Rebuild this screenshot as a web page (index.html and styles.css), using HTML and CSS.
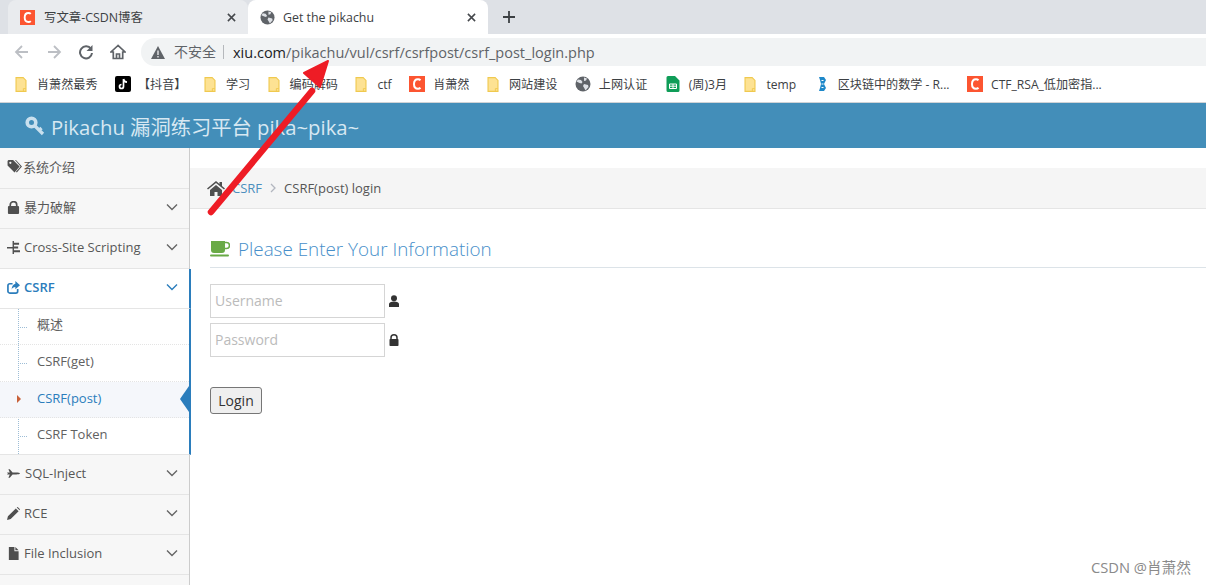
FILE: index.html
```html
<!DOCTYPE html>
<html lang="zh">
<head>
    <meta charset="UTF-8">
    <title>Get the pikachu</title>
    <link rel="stylesheet" href="styles.css">
</head>
<body>
    <svg class="defs" width="0" height="0">
        <defs>
            <symbol id="folder" viewBox="0 0 12 16">
                <path d="M.7.7h7.6l3 3v11.6H.7z" fill="#fdE293" stroke="#f0c94f" stroke-width="1.2"/>
                <path d="M8.5 15v-2.6h2.6" fill="none" stroke="#f0c94f" stroke-width="1"/>
            </symbol>
            <symbol id="csdn" viewBox="0 0 16 16">
                <rect width="16" height="16" fill="#fc5531"/>
                <path d="M11.5 4.2C10.8 3.5 9.9 3.2 9 3.2c-2.4 0-4 2-4 4.8s1.600 4.800 4 4.800c.9 0 1.800-.3 2.500-1" fill="none" stroke="#fff" stroke-width="2"/>
            </symbol>
            <symbol id="globe" viewBox="0 0 16 16">
                <circle cx="8" cy="8" r="7.500" fill="#5f6368"/>
                <path d="M3 3.500l3 .5 1.500 2-1 1.500-2-.5-3-1.500zM9 1.500l3 1-1 2-2 .5zM9 8l4 1 .5 2-3 3.500-1-2-1.500-2.500z" fill="#dee1e6"/>
            </symbol>
            <symbol id="chevron" viewBox="0 0 12 8">
                <path d="M1 1.500l5 5 5-5" fill="none" stroke="currentColor" stroke-width="1.400"/>
            </symbol>
        </defs>
    </svg>

    <div class="tabstrip">
        <div class="tab">
            <svg class="favicon"><use href="#csdn"/></svg>
            <span class="tab-title">写文章-CSDN博客</span>
            <svg class="tab-close" viewBox="0 0 10 10"><path d="M1 1l8 8M9 1l-8 8" stroke="#45484c" stroke-width="1.700"/></svg>
        </div>
        <div class="tab tab-active">
            <svg class="favicon"><use href="#globe"/></svg>
            <span class="tab-title">Get the pikachu</span>
            <svg class="tab-close" viewBox="0 0 10 10"><path d="M1 1l8 8M9 1l-8 8" stroke="#45484c" stroke-width="1.700"/></svg>
        </div>
        <svg class="newtab" viewBox="0 0 12 12"><path d="M6 0v12M0 6h12" stroke="#3c4043" stroke-width="1.800"/></svg>
    </div>

    <div class="toolbar">
        <svg class="nav-icon" viewBox="0 0 16 16"><path d="M14 8H2.500M8 2L2 8l6 6" fill="none" stroke="#bcbfc4" stroke-width="1.800"/></svg>
        <svg class="nav-icon" viewBox="0 0 16 16"><path d="M2 8h11.500M8 2l6 6-6 6" fill="none" stroke="#bcbfc4" stroke-width="1.800"/></svg>
        <svg class="nav-icon" viewBox="0 0 16 16"><path d="M13 5A6 6 0 1 0 14 9" fill="none" stroke="#5f6368" stroke-width="2"/><path d="M14.500 1v6h-6z" fill="#5f6368"/></svg>
        <svg class="nav-icon" viewBox="0 0 16 16"><path d="M8 1.500L1 8h2.300v6.500h9.400V8H15z M6.500 14.500V10h3v4.500" fill="none" stroke="#5f6368" stroke-width="1.700"/></svg>
        <div class="omnibox">
            <svg class="warn" viewBox="0 0 14 13"><path d="M7 0l7 13H0z" fill="#5f6368"/><path d="M7 4.500v4.500M7 10v1.500" stroke="#f1f3f4" stroke-width="1.300"/></svg>
            <span class="insecure">不安全</span>
            <span class="url"><b>xiu.com</b>/pikachu/vul/csrf/csrfpost/csrf_post_login.php</span>
        </div>
    </div>

    <div class="bookmarks">
        <div class="bm"><svg class="bm-icon"><use href="#folder"/></svg>肖萧然最秀</div>
        <div class="bm bm-tt">
            <svg class="bm-icon-full" viewBox="0 0 16 16"><rect width="16" height="16" rx="2" fill="#000"/><path d="M8.500 3v7.500a2 2 0 1 1-2-2M8.500 3c.3 2 1.500 3 3.500 3.200" fill="none" stroke="#fff" stroke-width="1.700"/></svg>【抖音】
        </div>
        <div class="bm"><svg class="bm-icon"><use href="#folder"/></svg>学习</div>
        <div class="bm"><svg class="bm-icon"><use href="#folder"/></svg>编码解码</div>
        <div class="bm"><svg class="bm-icon"><use href="#folder"/></svg>ctf</div>
        <div class="bm"><svg class="bm-icon-full"><use href="#csdn"/></svg>肖萧然</div>
        <div class="bm"><svg class="bm-icon"><use href="#folder"/></svg>网站建设</div>
        <div class="bm"><svg class="bm-icon-full"><use href="#globe"/></svg>上网认证</div>
        <div class="bm">
            <svg class="bm-icon-full" viewBox="0 0 16 16"><path d="M1.500 1.500a1.500 1.500 0 0 1 1.500-1.500h7l4.500 4.500v10a1.500 1.500 0 0 1-1.500 1.500H3a1.500 1.500 0 0 1-1.500-1.500z" fill="#0f9d58"/><path d="M4.500 8h7v4.500h-7zM8 8v4.500M4.500 10.200h7" fill="none" stroke="#fff" stroke-width="1"/></svg>(周)3月
        </div>
        <div class="bm"><svg class="bm-icon"><use href="#folder"/></svg>temp</div>
        <div class="bm">
            <svg class="bm-icon-full" viewBox="0 0 16 16"><path d="M5 1l5 0 2 3-2 4 2 4-2 3H5l1-3 1-4-1-4z" fill="#1e88c9"/><path d="M7.500 4.500h2M7.500 8h2M7.500 11.500h2" stroke="#fff" stroke-width="1"/></svg>区块链中的数学 - R...
        </div>
        <div class="bm"><svg class="bm-icon-full"><use href="#csdn"/></svg>CTF_RSA_低加密指...</div>
    </div>

    <header class="app-header">
        <svg class="key-icon" viewBox="0 0 20 20"><circle cx="6.500" cy="6.500" r="4.300" fill="none" stroke="#c9e0ee" stroke-width="3.600"/><path d="M9.500 9.500l8.500 8.500M14 14.500l2.500-2.500" fill="none" stroke="#c9e0ee" stroke-width="3.200"/></svg>
        <span>Pikachu 漏洞练习平台 pika~pika~</span>
    </header>

    <div class="page">
        <nav class="sidebar">
            <div class="nav-item nav-first">
                <svg class="nav-glyph" viewBox="0 0 16 14"><path d="M0 1.500C0 .7.700 0 1.500 0H6l7 7-5.500 6.500L0 6z" fill="#4f4f4f"/><path d="M8 0h1l6.500 7L10 13.500l-1-.8L14 7z" fill="#4f4f4f"/><circle cx="3" cy="3" r="1.200" fill="#f7f7f7"/></svg>
                <span>系统介绍</span>
            </div>
            <div class="nav-item">
                <svg class="nav-glyph" viewBox="0 0 14 14"><path d="M3.500 6V4.200a3.500 3.500 0 0 1 7 0V6" fill="none" stroke="#4f4f4f" stroke-width="1.800"/><rect x="1" y="5.500" width="12" height="8.500" rx="1" fill="#4f4f4f"/></svg>
                <span class="cjk-up">暴力破解</span>
                <svg class="chevron"><use href="#chevron"/></svg>
            </div>
            <div class="nav-item">
                <svg class="nav-glyph" viewBox="0 0 14 14"><path d="M6 0h1.500v14H6zM0 6.500h6v1.500H0zM7.500 2H13v2H7.500zM7.500 6H12v2H7.500zM7.500 10H14v2H7.500z" fill="#4f4f4f"/></svg>
                <span>Cross-Site Scripting</span>
                <svg class="chevron"><use href="#chevron"/></svg>
            </div>
            <div class="nav-item nav-open">
                <svg class="nav-glyph" viewBox="0 0 14 14"><path d="M11.500 8.500V11a2 2 0 0 1-2 2H3a2 2 0 0 1-2-2V5a2 2 0 0 1 2-2h3" fill="none" stroke="#2b7dbc" stroke-width="1.800"/><path d="M9 0l5 4.500L9 9V6.500C7 6.500 5.500 7.500 5 9.500 5 6 6.500 3.500 9 3z" fill="#2b7dbc"/></svg>
                <span>CSRF</span>
                <svg class="chevron"><use href="#chevron"/></svg>
            </div>
            <ul class="submenu">
                <li class="sub-item"><span class="cjk-up-more">概述</span></li>
                <li class="sub-item">CSRF(get)</li>
                <li class="sub-item sub-active">CSRF(post)</li>
                <li class="sub-item">CSRF Token</li>
            </ul>
            <div class="nav-item">
                <svg class="nav-glyph" viewBox="0 0 14 12"><path d="M0 5l3 0L1.500 1.500h1.500L6 5h4c2 0 4 .5 4 1s-2 1-4 1H6L3 10.500H1.500L3 7H0l1-1z" fill="#4f4f4f"/></svg>
                <span class="nav-label-loose">SQL-Inject</span>
                <svg class="chevron"><use href="#chevron"/></svg>
            </div>
            <div class="nav-item">
                <svg class="nav-glyph" viewBox="0 0 14 14"><path d="M0 14l1-4L9.500 1.500l3 3L4 13zM10.500.500l1-.5 2.500 2.500-.5 1z" fill="#4f4f4f"/></svg>
                <span>RCE</span>
                <svg class="chevron"><use href="#chevron"/></svg>
            </div>
            <div class="nav-item">
                <svg class="nav-glyph" viewBox="0 0 14 14"><path d="M2 0h6v4.500h4.500V14H2zM9 0l3.500 3.500H9z" fill="#4f4f4f"/></svg>
                <span>File Inclusion</span>
                <svg class="chevron"><use href="#chevron"/></svg>
            </div>
        </nav>

        <main class="content">
            <div class="breadcrumbs">
                <svg class="home-icon" viewBox="0 0 18 15"><path d="M9 0L0 7.500l1 1L9 2l8 6.500 1-1-3-2.500V1h-2.500v2z" fill="#4f4f4f"/><path d="M3 9l6-5 6 5v6h-4.500v-4h-3v4H3z" fill="#4f4f4f"/></svg>
                <a class="crumb-link">CSRF</a>
                <svg class="crumb-sep" viewBox="0 0 6 10"><path d="M1 1l4 4-4 4" fill="none" stroke="#b2b6bf" stroke-width="1.300"/></svg>
                <span>CSRF(post) login</span>
            </div>
            <div class="panel">
                <h3 class="panel-title">
                    <svg class="cup-icon" viewBox="0 0 20 16"><path d="M1 0h14v9a3 3 0 0 1-3 3H4a3 3 0 0 1-3-3z" fill="#69aa46"/><path d="M15 1.500h1.500a2.500 2.500 0 0 1 0 6H15" fill="none" stroke="#69aa46" stroke-width="1.600"/><rect y="13.500" width="19" height="2" rx="1" fill="#69aa46"/></svg>
                    Please Enter Your Information
                </h3>
                <form class="login">
                    <div class="field">
                        <input class="input" type="text" placeholder="Username">
                        <svg class="field-icon" viewBox="0 0 12 12"><circle cx="6" cy="3.200" r="3" fill="#333"/><path d="M1 12V9c0-1.500 2-2.500 5-2.500s5 1 5 2.500v3z" fill="#333"/></svg>
                    </div>
                    <div class="field">
                        <input class="input" type="text" placeholder="Password">
                        <svg class="field-icon" viewBox="0 0 12 12"><path d="M3 5.500V3.800a3 3 0 0 1 6 0v1.700" fill="none" stroke="#333" stroke-width="1.500"/><rect x="1.500" y="5" width="9" height="7" rx=".8" fill="#333"/></svg>
                    </div>
                    <button class="submit" type="button">Login</button>
                </form>
            </div>
        </main>
    </div>

    <!-- annotation drawn over the screenshot -->
    <svg class="arrow" viewBox="0 0 1206 585" width="1206" height="585">
        <path d="M211 212L312 91" stroke="#ee1c25" stroke-width="6.500" stroke-linecap="round"/>
        <path d="M328 61L304 73 320 87 328 61z" fill="#ee1c25" stroke="#ee1c25" stroke-width="2" stroke-linejoin="round"/>
    </svg>

    <div class="watermark">CSDN @肖萧然</div>
</body>
</html>
```

FILE: styles.css
```css
* {
    box-sizing: border-box;
}
html, body {
    height: 100%;
}
body {
    margin: 0;
    width: 1206px;
    height: 585px;
    overflow: hidden;
    position: relative;
    background: #fff;
    color: #3c4043;
    font-family: "Open Sans", "Noto Sans CJK SC", sans-serif;
    font-size: 13px;
}
.defs {
    display: block;
    height: 0;
}

/* browser chrome */
.tabstrip {
    height: 34px;
    display: flex;
    align-items: flex-end;
    padding-left: 8px;
    background: #dee1e6;
}
.tab {
    width: 240px;
    height: 34px;
    display: flex;
    align-items: center;
    padding: 0 12px;
    background: #e9ebee;
    border-radius: 8px 8px 0 0;
    font-size: 12.400px;
}
.tab-active {
    background: #fff;
}
.favicon {
    width: 15px;
    height: 15px;
    flex: none;
    margin-right: 9px;
}
.tab-active .favicon {
    margin-right: 8px;
}
.tab-title {
    flex: 1;
    white-space: nowrap;
}
.tab-close {
    width: 9px;
    height: 9px;
    flex: none;
}
.newtab {
    width: 12px;
    height: 12px;
    margin: 0 0 11px 15px;
}
.toolbar {
    height: 32px;
    display: flex;
    align-items: flex-end;
    padding-left: 14px;
    background: #fff;
}
.nav-icon {
    width: 16px;
    height: 16px;
    margin: 0 16px 6px 0;
    flex: none;
}
.omnibox {
    flex: 1;
    height: 28px;
    margin-left: -1px;
    display: flex;
    align-items: center;
    padding-left: 10px;
    background: #f1f3f4;
    border-radius: 14px 0 0 14px;
}
.warn {
    width: 14px;
    height: 13px;
    margin-right: 9px;
}
.insecure {
    padding-right: 7px;
    border-right: 1px solid #b5b8bc;
    line-height: 14px;
    font-size: 14px;
    color: #5f6368;
}
.url {
    margin-left: 9px;
    font-size: 14.500px;
    color: #5f6368;
    white-space: nowrap;
}
.url b {
    font-weight: 400;
    color: #202124;
}
.bookmarks {
    height: 37px;
    display: flex;
    align-items: center;
    gap: 17.500px;
    padding-left: 15px;
    background: #fff;
    border-bottom: 1px solid #d0d3d6;
    font-size: 12.100px;
    color: #3c4043;
    white-space: nowrap;
}
.bm {
    display: flex;
    align-items: center;
}
.bm-icon {
    width: 12px;
    height: 15px;
    margin-right: 10px;
    flex: none;
}
.bm-icon-full {
    width: 16px;
    height: 16px;
    margin-right: 8px;
    flex: none;
}
.bm-tt .bm-icon-full {
    margin-right: 7px;
}

/* pikachu page */
.app-header {
    height: 45px;
    display: flex;
    align-items: center;
    padding-left: 25px;
    background: #438eb9;
    color: #d7e8f2;
    font-size: 20.300px;
    white-space: nowrap;
}
.key-icon {
    width: 20px;
    height: 20px;
    margin-right: 6px;
}
.page {
    display: flex;
    height: 437px;
    overflow: hidden;
}
.sidebar {
    width: 190px;
    flex: none;
    background: #f7f7f7;
    border-right: 1px solid #ccc;
}
.nav-item {
    height: 40px;
    display: flex;
    align-items: center;
    padding: 0 11px 3px 7px;
    background: #f7f7f7;
    border-bottom: 1px solid #e5e5e5;
    color: #585858;
    white-space: nowrap;
}
.nav-first {
    height: 41px;
}
.nav-glyph {
    width: 13px;
    height: 13px;
    margin-right: 4px;
    flex: none;
}
.nav-first .nav-glyph {
    width: 16px;
    margin-right: 0;
}
.nav-label-loose {
    margin-left: 1px;
}
.cjk-up {
    margin-bottom: 2px;
}
.cjk-up-more {
    margin-bottom: 4px;
}
.chevron {
    width: 12px;
    height: 8px;
    margin-left: auto;
    color: #666;
}
.nav-open {
    background: #fff;
    color: #2b7dbc;
    font-weight: 600;
    width: 191px;
    border-right: 2px solid #2b7dbc;
}
.nav-open .chevron {
    color: #2b7dbc;
}
.submenu {
    list-style: none;
    margin: 0;
    padding: 0;
    width: 191px;
    background: #fff;
    border-right: 2px solid #2b7dbc;
    border-bottom: 1px solid #e5e5e5;
    position: relative;
}
.submenu::before {
    content: "";
    position: absolute;
    left: 18px;
    top: 0;
    bottom: 0;
    border-left: 1px dotted #9dbdd6;
}
.sub-item {
    height: 36.250px;
    display: flex;
    align-items: center;
    padding: 0 0 3px 37px;
    border-bottom: 1px dotted #e4e4e4;
    color: #616161;
    position: relative;
}
.sub-item:last-child {
    border-bottom: none;
}
.sub-item::before {
    content: "";
    position: absolute;
    left: 20px;
    top: 50%;
    width: 7px;
    border-top: 1px dotted #9dbdd6;
}
.sub-active {
    background: #f5f7fb;
    color: #2b7dbc;
}
.sub-active::before {
    left: 17px;
    top: 13px;
    width: 0;
    border-top: 4px solid transparent;
    border-bottom: 4px solid transparent;
    border-left: 4px solid #c86139;
}
.sub-active::after {
    content: "";
    position: absolute;
    right: 0;
    top: 4px;
    border-top: 13px solid transparent;
    border-bottom: 13px solid transparent;
    border-right: 9px solid #2b7dbc;
}
.content {
    flex: 1;
    min-width: 0;
}
.breadcrumbs {
    height: 41px;
    margin-top: 20px;
    display: flex;
    align-items: center;
    padding-left: 17px;
    background: #f5f5f5;
    border-bottom: 1px solid #e5e5e5;
    color: #555;
}
.home-icon {
    width: 18px;
    height: 15px;
    margin-right: 7px;
}
.crumb-link {
    color: #4c8fbd;
}
.crumb-sep {
    width: 6px;
    height: 10px;
    margin: 0 8px;
}
.panel {
    padding: 0 0 0 20px;
}
.panel-title {
    height: 59px;
    margin: 0;
    padding-top: 21px;
    display: flex;
    align-items: center;
    border-bottom: 1px solid #dce3e8;
    color: #478fca;
    font-size: 18.850px;
    font-weight: 300;
}
.cup-icon {
    width: 20px;
    height: 16px;
    margin-right: 8px;
}
.login {
    padding-top: 16px;
}
.field {
    display: flex;
    align-items: center;
    margin-bottom: 5px;
}
.input {
    width: 175px;
    height: 34px;
    padding: 0 4px 2px;
    border: 1px solid #d5d5d5;
    background: #fff;
    font-family: inherit;
    font-size: 14px;
}
.input::placeholder {
    color: #bbb;
}
.field-icon {
    width: 12px;
    height: 12px;
    margin-left: 3px;
}
.submit {
    display: block;
    width: 52px;
    height: 27px;
    margin-top: 30px;
    padding: 0;
    border: 1px solid #767676;
    border-radius: 3px;
    background: #efefef;
    color: #333;
    font-family: inherit;
    font-size: 14px;
}

/* overlays */
.arrow {
    position: absolute;
    left: 0;
    top: 0;
    pointer-events: none;
}
.watermark {
    position: absolute;
    right: 15px;
    bottom: 8px;
    color: #8a8a8a;
    font-size: 14.700px;
}
```
